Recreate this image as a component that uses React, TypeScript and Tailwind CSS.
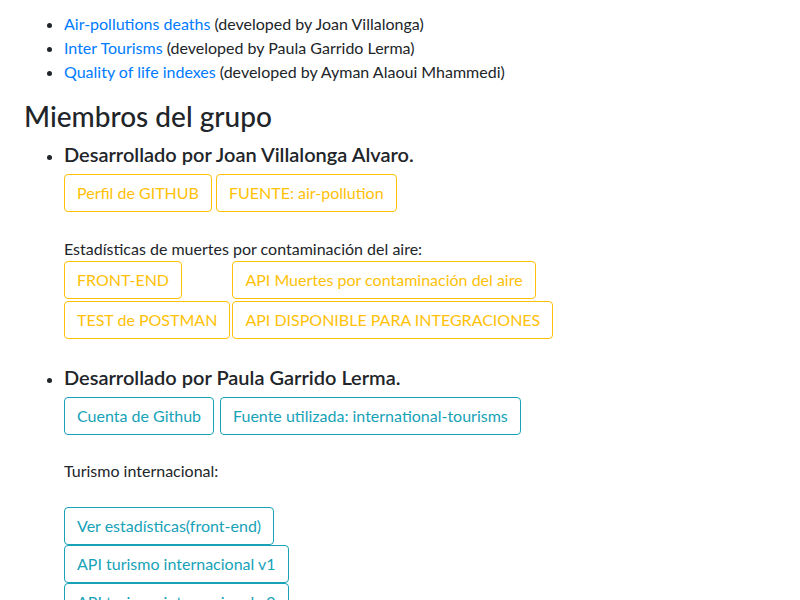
const warn =
  "inline-block rounded border border-[#ffc107] px-3 py-1.5 text-base leading-6 text-[#ffc107] bg-white align-middle";
const info =
  "inline-block rounded border border-[#17a2b8] px-3 py-1.5 text-base leading-6 text-[#17a2b8] bg-white align-middle";

const projects = [
  { name: "Air-pollutions deaths", by: "Joan Villalonga" },
  { name: "Inter Tourisms", by: "Paula Garrido Lerma" },
  { name: "Quality of life indexes", by: "Ayman Alaoui Mhammedi" },
];

export default function App() {
  return (
    <div className="min-h-screen bg-white pl-6 pt-3 text-base leading-6 text-[#212529] font-['Lato','Liberation_Sans',sans-serif]">
      {/* Projects */}
      <ul className="mb-4 list-disc pl-10">
        {projects.map((p) => (
          <li key={p.name}>
            <a href="#" className="text-[#007bff]">
              {p.name}
            </a>{" "}
            (developed by {p.by})
          </li>
        ))}
      </ul>

      <h3 className="mb-2 text-[28px] leading-[1.2] font-medium">Miembros del grupo</h3>

      <ul className="list-disc pl-10">
        {/* Joan */}
        <li>
          <h5 className="mb-2 text-xl leading-[1.2] font-semibold">
            Desarrollado por Joan Villalonga Alvaro.
          </h5>
          <div className="flex gap-1">
            <a href="#" className={warn}>Perfil de GITHUB</a>
            <a href="#" className={warn}>FUENTE: air-pollution</a>
          </div>
          <div className="h-[25px]" />
          <p>Estadísticas de muertes por contaminación del aire:</p>
          <div className="grid w-max grid-cols-[auto_auto] gap-0.5 pb-0.5">
            <div>
              <a href="#" className={warn}>FRONT-END</a>
            </div>
            <div>
              <a href="#" className={warn}>API Muertes por contaminación del aire</a>
            </div>
            <div>
              <a href="#" className={warn}>TEST de POSTMAN</a>
            </div>
            <div>
              <a href="#" className={warn}>API DISPONIBLE PARA INTEGRACIONES</a>
            </div>
          </div>
          <div className="h-6" />
        </li>

        {/* Paula */}
        <li>
          <h5 className="mb-2 text-xl leading-[1.2] font-semibold">
            Desarrollado por Paula Garrido Lerma.
          </h5>
          <div className="flex gap-1.5">
            <a href="#" className={info}>Cuenta de Github</a>
            <a href="#" className={info}>Fuente utilizada: international-tourisms</a>
          </div>
          <div className="h-6" />
          <p>Turismo internacional:</p>
          <div className="h-6" />
          <div className="flex flex-col items-start">
            <a href="#" className={info}>Ver estadísticas(front-end)</a>
            <a href="#" className={info}>API turismo internacional v1</a>
            <a href="#" className={info}>API turismo internacional v2</a>
          </div>
        </li>
      </ul>
    </div>
  );
}
